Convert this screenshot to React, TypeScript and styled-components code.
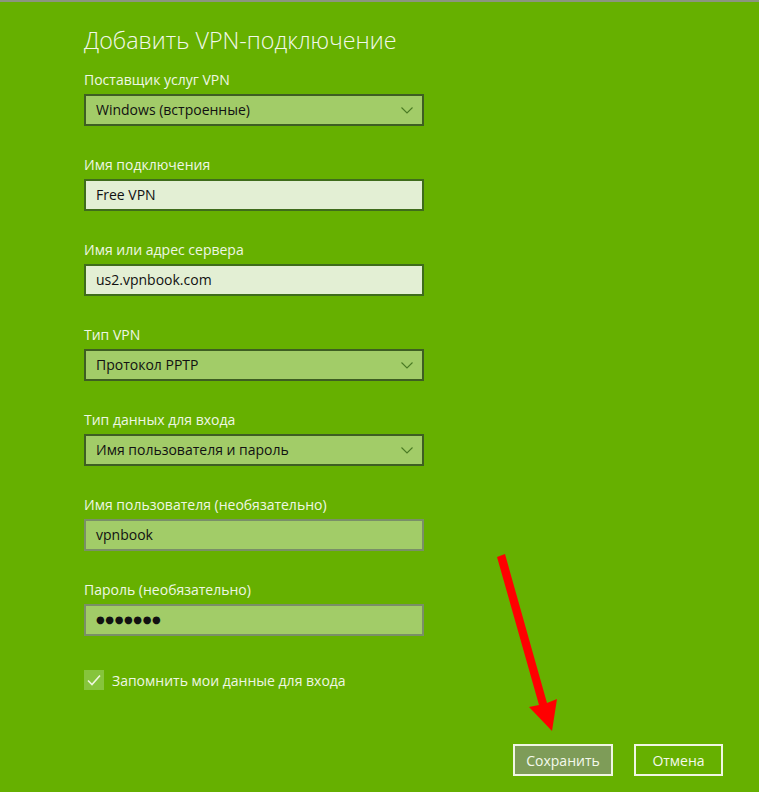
import styled, { createGlobalStyle } from "styled-components";

const GlobalStyle = createGlobalStyle`
  html, body {
    margin: 0;
    padding: 0;
    background: #66b000;
  }
  body {
    font-family: "Open Sans", "Noto Sans", sans-serif;
  }
`;

type FieldKind = "select" | "text" | "filled";

interface FieldDef {
  label: string;
  value: string;
  kind: FieldKind;
  secret?: boolean;
}

const fields: FieldDef[] = [
  { label: "Поставщик услуг VPN", value: "Windows (встроенные)", kind: "select" },
  { label: "Имя подключения", value: "Free VPN", kind: "text" },
  { label: "Имя или адрес сервера", value: "us2.vpnbook.com", kind: "text" },
  { label: "Тип VPN", value: "Протокол PPTP", kind: "select" },
  { label: "Тип данных для входа", value: "Имя пользователя и пароль", kind: "select" },
  { label: "Имя пользователя (необязательно)", value: "vpnbook", kind: "filled" },
  { label: "Пароль (необязательно)", value: "●●●●●●●", kind: "filled", secret: true },
];

export default function App() {
  return (
    <Window>
      <GlobalStyle />
      <Dialog>
        <Title>Добавить VPN-подключение</Title>
        <Form>
          {fields.map((f) => (
            <Group key={f.label}>
              <Label>{f.label}</Label>
              <Box $kind={f.kind}>
                <Value $secret={f.secret}>{f.value}</Value>
                {f.kind === "select" && <Chevron />}
              </Box>
            </Group>
          ))}
        </Form>
        <CheckRow>
          <CheckBox>
            <svg width="20" height="20" viewBox="0 0 20 20">
              <path d="M4 10.5 L8 14.5 L16 5.5" fill="none" stroke="#eef7e0" strokeWidth="1.6" />
            </svg>
          </CheckBox>
          <CheckText>Запомнить мои данные для входа</CheckText>
        </CheckRow>
      </Dialog>
      <Footer>
        <Button $primary>Сохранить</Button>
        <Button>Отмена</Button>
      </Footer>
      <Arrow />
    </Window>
  );
}

function Chevron() {
  return (
    <ChevronIcon width="12" height="7" viewBox="0 0 12 7">
      <path d="M0.5 0.5 L6 6 L11.5 0.5" fill="none" stroke="#4a7a24" strokeWidth="1.1" />
    </ChevronIcon>
  );
}

function Arrow() {
  return (
    <ArrowSvg width="759" height="792" viewBox="0 0 759 792">
      <polygon points="497,555 505,552 547,701 557,697 552,729 529,705 539,703" fill="#ff0000" />
    </ArrowSvg>
  );
}

const Window = styled.div`
  position: relative;
  width: 759px;
  height: 792px;
  box-sizing: border-box;
  border-top: 2px solid #8c9580;
  background: #66b000;
  overflow: hidden;
`;

const Dialog = styled.div`
  padding: 23px 0 0 84px;
  width: 340px;
`;

const Title = styled.h1`
  margin: 0;
  font-family: "Open Sans", "Noto Sans", sans-serif;
  font-weight: 300;
  font-size: 23.3px;
  line-height: 30px;
  color: #f2f8ea;
`;

const Form = styled.div`
  margin-top: 15px;
  display: flex;
  flex-direction: column;
  gap: 29px;
`;

const Group = styled.div`
  display: flex;
  flex-direction: column;
  gap: 4px;
`;

const Label = styled.div`
  font-size: 14px;
  line-height: 20px;
  color: #eef7e4;
`;

const kindStyles: Record<FieldKind, string> = {
  select: "background: #a2cc68; border-color: #3e5e22;",
  text: "background: #e3efd4; border-color: #3f6c1c;",
  filled: "background: #a2cc68; border-color: #7a8f68;",
};

const Box = styled.div<{ $kind: FieldKind }>`
  height: 32px;
  box-sizing: border-box;
  border: 2px solid;
  ${(p) => kindStyles[p.$kind]}
  display: flex;
  align-items: center;
  padding: 0 9px 0 10px;
`;

const Value = styled.span<{ $secret?: boolean }>`
  flex: 1;
  font-family: ${(p) => (p.$secret ? "'DejaVu Sans', sans-serif" : "inherit")};
  font-size: ${(p) => (p.$secret ? "10px" : "14px")};
  letter-spacing: ${(p) => (p.$secret ? "0.6px" : "0")};
  line-height: 20px;
  color: #111;
`;

const ChevronIcon = styled.svg`
  flex: none;
`;

const CheckRow = styled.div`
  margin-top: 34px;
  display: flex;
  align-items: center;
  gap: 8px;
`;

const CheckBox = styled.div`
  width: 20px;
  height: 20px;
  background: #86c43c;
`;

const CheckText = styled.div`
  font-size: 14px;
  color: #eef7e4;
`;

const Footer = styled.div`
  position: absolute;
  left: 513px;
  top: 742px;
  display: flex;
  gap: 21px;
`;

const Button = styled.button<{ $primary?: boolean }>`
  height: 32px;
  width: ${(p) => (p.$primary ? "100px" : "89px")};
  box-sizing: border-box;
  padding: 0;
  border: 2px solid #f0f6e4;
  background: ${(p) => (p.$primary ? "#7e9c58" : "transparent")};
  color: #f4f9ec;
  font-family: "Open Sans", "Noto Sans", sans-serif;
  font-size: 14px;
`;

const ArrowSvg = styled.svg`
  position: absolute;
  left: 0;
  top: 0;
  pointer-events: none;
`;
